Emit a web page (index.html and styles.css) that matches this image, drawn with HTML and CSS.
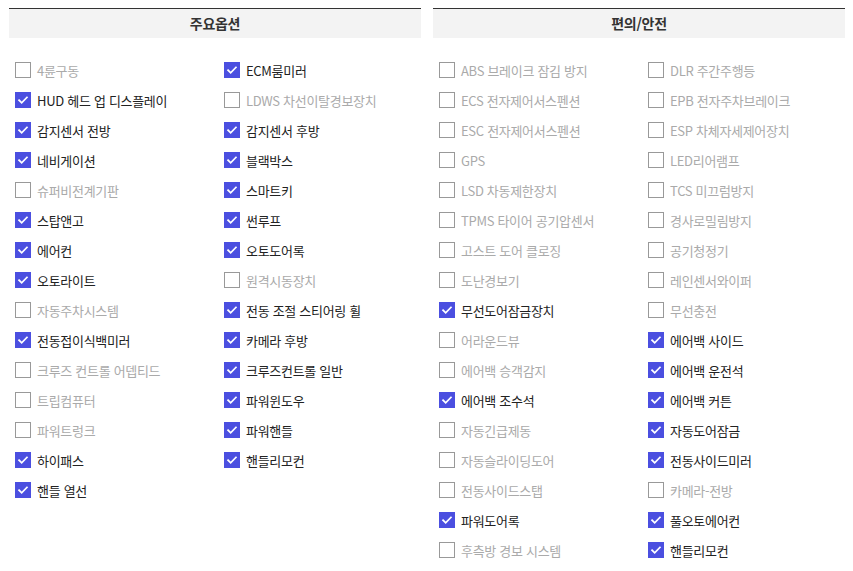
FILE: index.html
```html
<!DOCTYPE html>
<html lang="ko">
<head>
<meta charset="utf-8">
<link rel="stylesheet" href="styles.css">
</head>
<body>
<div class="wrap">
  <section class="panel">
    <h2 class="panel-title">주요옵션</h2>
    <ul class="opts">
      <li class="opt"><span class="box"></span><span class="lbl">4륜구동</span></li>
      <li class="opt on"><span class="box"><svg viewBox="0 0 16 16"><path d="M3.5 8.2l3 3 6-6.2"/></svg></span><span class="lbl">ECM룸미러</span></li>
      <li class="opt on"><span class="box"><svg viewBox="0 0 16 16"><path d="M3.5 8.2l3 3 6-6.2"/></svg></span><span class="lbl">HUD 헤드 업 디스플레이</span></li>
      <li class="opt"><span class="box"></span><span class="lbl">LDWS 차선이탈경보장치</span></li>
      <li class="opt on"><span class="box"><svg viewBox="0 0 16 16"><path d="M3.5 8.2l3 3 6-6.2"/></svg></span><span class="lbl">감지센서 전방</span></li>
      <li class="opt on"><span class="box"><svg viewBox="0 0 16 16"><path d="M3.5 8.2l3 3 6-6.2"/></svg></span><span class="lbl">감지센서 후방</span></li>
      <li class="opt on"><span class="box"><svg viewBox="0 0 16 16"><path d="M3.5 8.2l3 3 6-6.2"/></svg></span><span class="lbl">네비게이션</span></li>
      <li class="opt on"><span class="box"><svg viewBox="0 0 16 16"><path d="M3.5 8.2l3 3 6-6.2"/></svg></span><span class="lbl">블랙박스</span></li>
      <li class="opt"><span class="box"></span><span class="lbl">슈퍼비전계기판</span></li>
      <li class="opt on"><span class="box"><svg viewBox="0 0 16 16"><path d="M3.5 8.2l3 3 6-6.2"/></svg></span><span class="lbl">스마트키</span></li>
      <li class="opt on"><span class="box"><svg viewBox="0 0 16 16"><path d="M3.5 8.2l3 3 6-6.2"/></svg></span><span class="lbl">스탑앤고</span></li>
      <li class="opt on"><span class="box"><svg viewBox="0 0 16 16"><path d="M3.5 8.2l3 3 6-6.2"/></svg></span><span class="lbl">썬루프</span></li>
      <li class="opt on"><span class="box"><svg viewBox="0 0 16 16"><path d="M3.5 8.2l3 3 6-6.2"/></svg></span><span class="lbl">에어컨</span></li>
      <li class="opt on"><span class="box"><svg viewBox="0 0 16 16"><path d="M3.5 8.2l3 3 6-6.2"/></svg></span><span class="lbl">오토도어록</span></li>
      <li class="opt on"><span class="box"><svg viewBox="0 0 16 16"><path d="M3.5 8.2l3 3 6-6.2"/></svg></span><span class="lbl">오토라이트</span></li>
      <li class="opt"><span class="box"></span><span class="lbl">원격시동장치</span></li>
      <li class="opt"><span class="box"></span><span class="lbl">자동주차시스템</span></li>
      <li class="opt on"><span class="box"><svg viewBox="0 0 16 16"><path d="M3.5 8.2l3 3 6-6.2"/></svg></span><span class="lbl">전동 조절 스티어링 휠</span></li>
      <li class="opt on"><span class="box"><svg viewBox="0 0 16 16"><path d="M3.5 8.2l3 3 6-6.2"/></svg></span><span class="lbl">전동접이식백미러</span></li>
      <li class="opt on"><span class="box"><svg viewBox="0 0 16 16"><path d="M3.5 8.2l3 3 6-6.2"/></svg></span><span class="lbl">카메라 후방</span></li>
      <li class="opt"><span class="box"></span><span class="lbl">크루즈 컨트롤 어뎁티드</span></li>
      <li class="opt on"><span class="box"><svg viewBox="0 0 16 16"><path d="M3.5 8.2l3 3 6-6.2"/></svg></span><span class="lbl">크루즈컨트롤 일반</span></li>
      <li class="opt"><span class="box"></span><span class="lbl">트립컴퓨터</span></li>
      <li class="opt on"><span class="box"><svg viewBox="0 0 16 16"><path d="M3.5 8.2l3 3 6-6.2"/></svg></span><span class="lbl">파워윈도우</span></li>
      <li class="opt"><span class="box"></span><span class="lbl">파워트렁크</span></li>
      <li class="opt on"><span class="box"><svg viewBox="0 0 16 16"><path d="M3.5 8.2l3 3 6-6.2"/></svg></span><span class="lbl">파워핸들</span></li>
      <li class="opt on"><span class="box"><svg viewBox="0 0 16 16"><path d="M3.5 8.2l3 3 6-6.2"/></svg></span><span class="lbl">하이패스</span></li>
      <li class="opt on"><span class="box"><svg viewBox="0 0 16 16"><path d="M3.5 8.2l3 3 6-6.2"/></svg></span><span class="lbl">핸들리모컨</span></li>
      <li class="opt on"><span class="box"><svg viewBox="0 0 16 16"><path d="M3.5 8.2l3 3 6-6.2"/></svg></span><span class="lbl">핸들 열선</span></li>
    </ul>
  </section>
  <section class="panel">
    <h2 class="panel-title">편의/안전</h2>
    <ul class="opts">
      <li class="opt"><span class="box"></span><span class="lbl">ABS 브레이크 잠김 방지</span></li>
      <li class="opt"><span class="box"></span><span class="lbl">DLR 주간주행등</span></li>
      <li class="opt"><span class="box"></span><span class="lbl">ECS 전자제어서스펜션</span></li>
      <li class="opt"><span class="box"></span><span class="lbl">EPB 전자주차브레이크</span></li>
      <li class="opt"><span class="box"></span><span class="lbl">ESC 전자제어서스펜션</span></li>
      <li class="opt"><span class="box"></span><span class="lbl">ESP 차체자세제어장치</span></li>
      <li class="opt"><span class="box"></span><span class="lbl">GPS</span></li>
      <li class="opt"><span class="box"></span><span class="lbl">LED리어램프</span></li>
      <li class="opt"><span class="box"></span><span class="lbl">LSD 차동제한장치</span></li>
      <li class="opt"><span class="box"></span><span class="lbl">TCS 미끄럼방지</span></li>
      <li class="opt"><span class="box"></span><span class="lbl">TPMS 타이어 공기압센서</span></li>
      <li class="opt"><span class="box"></span><span class="lbl">경사로밀림방지</span></li>
      <li class="opt"><span class="box"></span><span class="lbl">고스트 도어 클로징</span></li>
      <li class="opt"><span class="box"></span><span class="lbl">공기청정기</span></li>
      <li class="opt"><span class="box"></span><span class="lbl">도난경보기</span></li>
      <li class="opt"><span class="box"></span><span class="lbl">레인센서와이퍼</span></li>
      <li class="opt on"><span class="box"><svg viewBox="0 0 16 16"><path d="M3.5 8.2l3 3 6-6.2"/></svg></span><span class="lbl">무선도어잠금장치</span></li>
      <li class="opt"><span class="box"></span><span class="lbl">무선충전</span></li>
      <li class="opt"><span class="box"></span><span class="lbl">어라운드뷰</span></li>
      <li class="opt on"><span class="box"><svg viewBox="0 0 16 16"><path d="M3.5 8.2l3 3 6-6.2"/></svg></span><span class="lbl">에어백 사이드</span></li>
      <li class="opt"><span class="box"></span><span class="lbl">에어백 승객감지</span></li>
      <li class="opt on"><span class="box"><svg viewBox="0 0 16 16"><path d="M3.5 8.2l3 3 6-6.2"/></svg></span><span class="lbl">에어백 운전석</span></li>
      <li class="opt on"><span class="box"><svg viewBox="0 0 16 16"><path d="M3.5 8.2l3 3 6-6.2"/></svg></span><span class="lbl">에어백 조수석</span></li>
      <li class="opt on"><span class="box"><svg viewBox="0 0 16 16"><path d="M3.5 8.2l3 3 6-6.2"/></svg></span><span class="lbl">에어백 커튼</span></li>
      <li class="opt"><span class="box"></span><span class="lbl">자동긴급제동</span></li>
      <li class="opt on"><span class="box"><svg viewBox="0 0 16 16"><path d="M3.5 8.2l3 3 6-6.2"/></svg></span><span class="lbl">자동도어잠금</span></li>
      <li class="opt"><span class="box"></span><span class="lbl">자동슬라이딩도어</span></li>
      <li class="opt on"><span class="box"><svg viewBox="0 0 16 16"><path d="M3.5 8.2l3 3 6-6.2"/></svg></span><span class="lbl">전동사이드미러</span></li>
      <li class="opt"><span class="box"></span><span class="lbl">전동사이드스탭</span></li>
      <li class="opt"><span class="box"></span><span class="lbl">카메라-전방</span></li>
      <li class="opt on"><span class="box"><svg viewBox="0 0 16 16"><path d="M3.5 8.2l3 3 6-6.2"/></svg></span><span class="lbl">파워도어록</span></li>
      <li class="opt on"><span class="box"><svg viewBox="0 0 16 16"><path d="M3.5 8.2l3 3 6-6.2"/></svg></span><span class="lbl">풀오토에어컨</span></li>
      <li class="opt"><span class="box"></span><span class="lbl">후측방 경보 시스템</span></li>
      <li class="opt on"><span class="box"><svg viewBox="0 0 16 16"><path d="M3.5 8.2l3 3 6-6.2"/></svg></span><span class="lbl">핸들리모컨</span></li>
    </ul>
  </section>
</div>
</body>
</html>
```

FILE: styles.css
```css
* { box-sizing: border-box; }
html, body { margin: 0; padding: 0; background: #fff; }
body {
  font-family: "Noto Sans CJK KR", "Noto Sans", sans-serif;
  color: #222;
}
.wrap {
  display: flex;
  gap: 12px;
  padding: 8px 0 0 9px;
}
.panel { width: 412px; }
.panel-title {
  margin: 0;
  height: 30px;
  line-height: 29px;
  border-top: 1px solid #333;
  background: #f3f3f3;
  text-align: center;
  font-size: 14px;
  font-weight: 700;
  color: #333;
  letter-spacing: -0.3px;
}
.opts {
  list-style: none;
  margin: 0;
  padding: 17px 0 0 6px;
  display: grid;
  grid-template-columns: 209px 197px;
  grid-auto-rows: 30px;
}
.opt {
  display: flex;
  align-items: center;
  gap: 6px;
  font-size: 13px;
  letter-spacing: -0.3px;
  color: #aaa;
  white-space: nowrap;
}
.opt.on { color: #222; }
.box {
  width: 16px;
  height: 16px;
  flex: none;
  border: 1px solid #999;
  background: #fff;
  display: flex;
}
.opt.on .box {
  border-color: #4b4fe0;
  background: #4b4fe0;
}
.box svg {
  width: 14px;
  height: 14px;
}
.box svg path {
  fill: none;
  stroke: #fff;
  stroke-width: 2;
  stroke-linecap: square;
}
```
